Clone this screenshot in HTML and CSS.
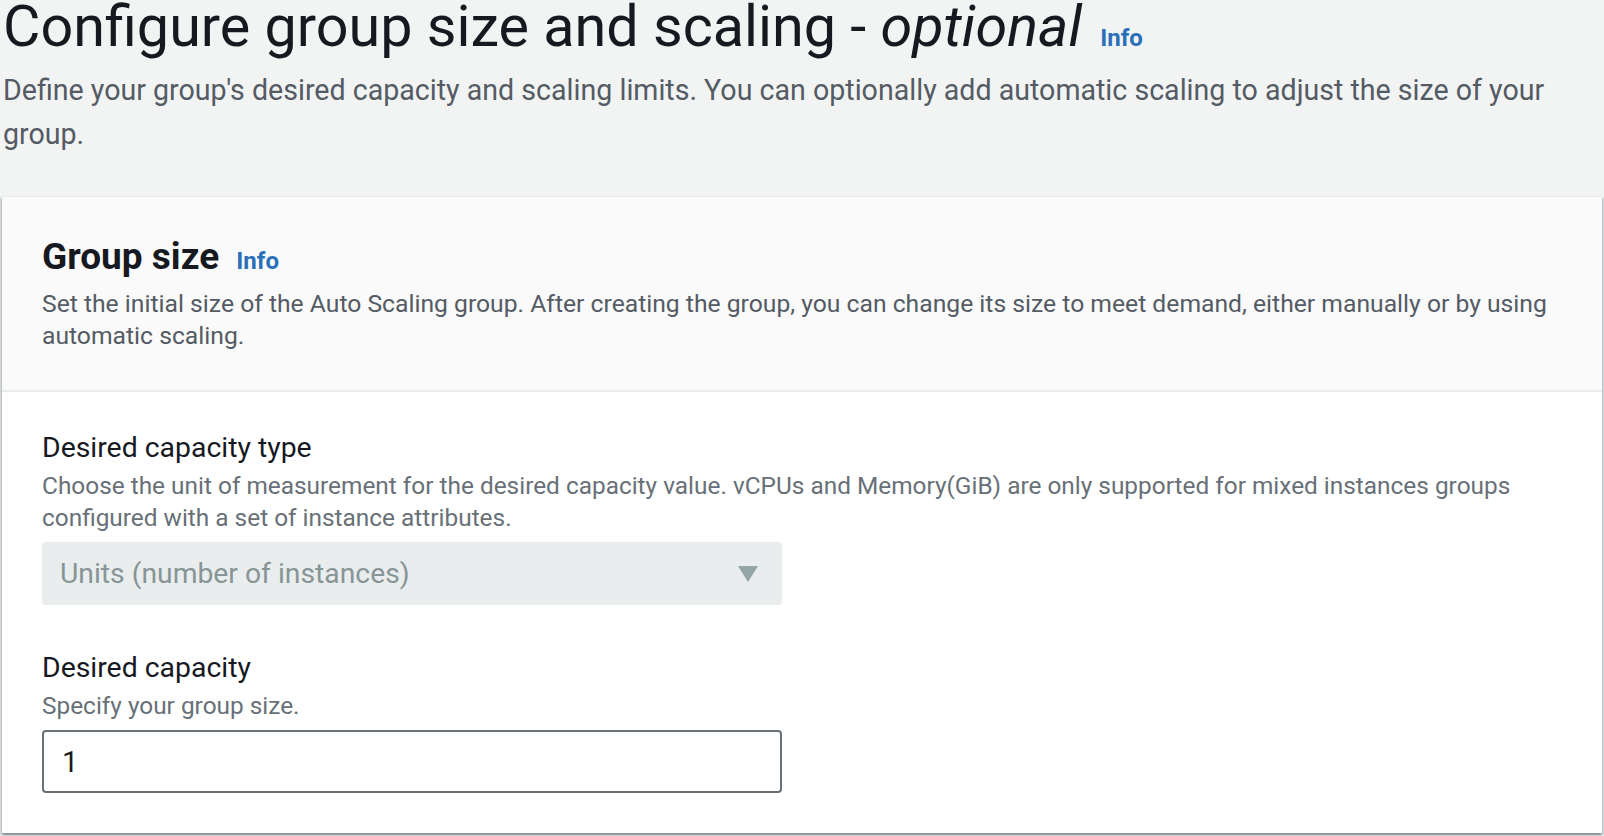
FILE: index.html
```html
<!DOCTYPE html>
<html lang="en">
<head>
<meta charset="utf-8">
<title>Configure group size and scaling</title>
<link rel="stylesheet" href="styles.css">
</head>
<body>
<div class="page">
  <header class="page-header">
    <h1 class="page-title">Configure group size and scaling - <em>optional</em> <a class="info" href="#">Info</a></h1>
    <p class="page-desc">Define your group's desired capacity and scaling limits. You can optionally add automatic scaling to adjust the size of your group.</p>
  </header>

  <section class="card">
    <div class="card-header">
      <h2 class="card-title">Group size <a class="info" href="#">Info</a></h2>
      <p class="card-desc">Set the initial size of the Auto Scaling group. After creating the group, you can change its size to meet demand, either manually or by using automatic scaling.</p>
    </div>
    <div class="card-body">
      <div class="field">
        <div class="field-label">Desired capacity type</div>
        <div class="field-desc">Choose the unit of measurement for the desired capacity value. vCPUs and Memory(GiB) are only supported for mixed instances groups configured with a set of instance attributes.</div>
        <div class="select">
          <span class="select-value">Units (number of instances)</span>
          <svg class="caret" width="20" height="16" viewBox="0 0 20 16" aria-hidden="true"><polygon points="0,0 20,0 10,16" fill="#95a5a6"/></svg>
        </div>
      </div>
      <div class="field field-second">
        <div class="field-label">Desired capacity</div>
        <div class="field-desc">Specify your group size.</div>
        <div class="input">1</div>
      </div>
    </div>
  </section>
</div>
</body>
</html>
```

FILE: styles.css
```css
html, body {
  margin: 0;
  padding: 0;
}
body {
  background: #f2f3f3;
  font-family: Roboto, "Noto Sans", sans-serif;
  color: #16191f;
  width: 1604px;
  height: 836px;
  overflow: hidden;
}
.page {
  padding: 0 2px;
}
.page-title {
  margin: 0;
  padding-left: 1px;
  font-size: 57.5px;
  line-height: 53px;
  font-weight: 400;
  color: #16191f;
  white-space: nowrap;
}
.page-title em {
  font-style: italic;
}
.info {
  font-size: 24px;
  line-height: 1;
  font-weight: 700;
  color: #2a70b9;
  text-decoration: none;
  margin-left: 4px;
}
.page-desc {
  margin: 15px 0 0 0;
  padding-left: 1px;
  font-size: 28.6px;
  line-height: 44px;
  color: #545b64;
  max-width: 1560px;
}
.card {
  margin-top: 40px;
  background: #ffffff;
  border-top: 1px solid #eaeded;
  box-shadow: 0 2px 2px 0 rgba(0, 28, 36, 0.3), 2px 2px 2px 0 rgba(0, 28, 36, 0.15), -2px 2px 2px 0 rgba(0, 28, 36, 0.15);
  height: 637px;
  box-sizing: border-box;
}
.card-header {
  background: #fafafa;
  border-bottom: 2px solid #eaeded;
  padding: 38px 40px 38px 40px;
}
.card-title {
  margin: 0;
  font-size: 37px;
  line-height: 44px;
  font-weight: 700;
  color: #16191f;
}
.card-title .info {
  margin-left: 8px;
}
.card-desc {
  margin: 9px 0 0 0;
  font-size: 24.7px;
  line-height: 32px;
  color: #545b64;
}
.card-body {
  padding: 40px 40px 0 40px;
}
.field-label {
  font-size: 28.4px;
  line-height: 32px;
  color: #16191f;
}
.field-desc {
  margin-top: 6px;
  font-size: 24.4px;
  line-height: 32px;
  color: #687078;
}
.select {
  margin-top: 8px;
  width: 740px;
  height: 63px;
  box-sizing: border-box;
  background: #eaeded;
  border-radius: 4px;
  display: flex;
  align-items: center;
  justify-content: space-between;
  padding: 0 24px 0 18px;
}
.select-value {
  font-size: 28.3px;
  color: #879596;
}
.caret {
  display: block;
}
.field-second {
  margin-top: 47px;
}
.input {
  margin-top: 8px;
  width: 740px;
  height: 63px;
  box-sizing: border-box;
  border: 2px solid #687078;
  border-radius: 4px;
  background: #ffffff;
  display: flex;
  align-items: center;
  padding: 0 18px;
  font-size: 29px;
  color: #16191f;
}
```
